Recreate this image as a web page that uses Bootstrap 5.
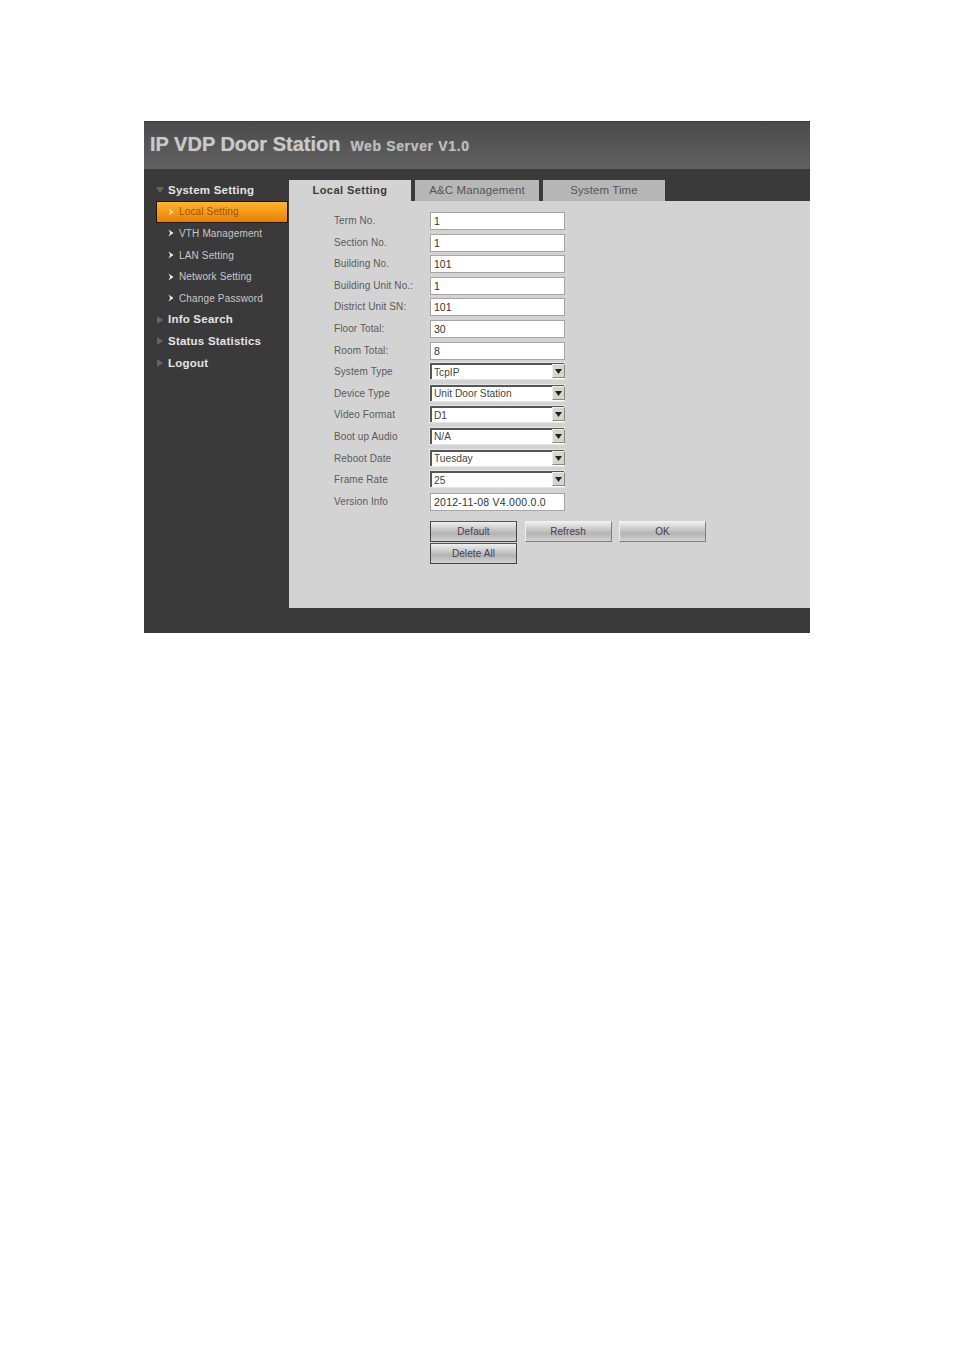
<!DOCTYPE html>
<html lang="en">
<head>
<meta charset="utf-8">
<title>IP VDP Door Station</title>
<link href="https://cdn.jsdelivr.net/npm/bootstrap@5.3.0/dist/css/bootstrap.min.css" rel="stylesheet">
<style>
body{background:#fff;font-family:"Liberation Sans",Arial,sans-serif;min-height:1349px}
.sheet{padding:121px 144px 0;}
.win{width:666px;height:512px;background:#3a3a3a;border-top:1px solid #3c3c3c;overflow:hidden}
.hdr{height:47px;background:linear-gradient(#4b4b4b,#616161);color:#c9c9c9;padding:9px 0 0 6px;gap:10px;text-shadow:0 0 1px #999}
.hdr-a{font-size:20px;font-weight:700;line-height:26px}
.hdr-b{font-size:14px;font-weight:700;line-height:30px;letter-spacing:.65px;color:#bdbdbd}
.bodyrow{height:439px}
.side{width:145px;padding:10.5px 0 0 12px;flex:none}
.grp{height:21.6px;font-size:11.5px;font-weight:700;color:#e4e4e4;letter-spacing:.22px;gap:4px;line-height:21px}
.grp svg{flex:none;width:8px;height:8px}
.sub{height:21.6px;font-size:10px;color:#c8c8c8;width:132px;gap:5px;padding-left:12px;line-height:21px;letter-spacing:.15px}
.sub svg{flex:none;width:6px;height:8px}
.sub.on{background:linear-gradient(#ffb52e,#e97f05);color:#a0520c;border:1px solid #20150a;padding-left:11px}
.main{flex:1;padding-top:11px;min-width:0}
.tabbar{height:21px;gap:4px}
.tabx{background:#b7b7b7;color:#555;font-size:11.5px;line-height:21px;text-align:center;border:0;border-radius:0;padding:0;letter-spacing:.1px}
.t1{width:122px;background:#d3d3d3;color:#3b3b3b;font-size:11px;font-weight:700;letter-spacing:.45px}
.t2{width:124px}.t3{width:122px}
.panel{background:#d3d3d3;height:407px;padding:11px 0 0 45px}
.frow{height:21.6px;align-items:flex-start}
.lab{width:96px;font-size:10px;color:#5a5a5a;line-height:18px;letter-spacing:.1px;margin:0;padding:0}
.inp.form-control{width:135px;height:18px;min-height:0;border:1px solid #a5a5a5;border-radius:0;padding:0 3px;font-size:10.5px;line-height:16px;color:#333;background:#fff;font-family:inherit;box-shadow:none}
.inp.wide.form-control{font-size:10.5px;letter-spacing:.25px}
.seln{width:136px;height:17px;position:relative;flex:none}
.sel.form-select{width:134px;height:16px;min-height:0;border:0;border-top:2px solid #555;border-left:2px solid #555;outline:1px solid #e6e6e6;outline-offset:0;border-radius:0;padding:0 18px 0 2px;font-size:10.2px;line-height:13px;color:#444;background:#fff;font-family:inherit;box-shadow:none}
.arrow{position:absolute;right:1px;top:1px;width:13px;height:14px;background:#d8d4c8;border:1px solid #8a8a80;border-top-color:#eee;border-left-color:#eee}
.arrow svg{display:block;width:7px;height:5px;margin:4px 0 0 2px}
.acts{width:280px;margin:6.5px 0 0 96px;gap:1px 7.5px}
.btnx.btn{width:87px;height:21px;padding:0;font-size:10px;line-height:19px;color:#4c3c4c;border:1px solid #7e7e7e;border-top-color:#f2f2f2;border-left-color:#eee;border-radius:0;background:linear-gradient(#efefef,#b4b4b4 60%,#d2d2d2);letter-spacing:.1px}
.btnx.dk{border-color:#444;border-top-color:#555}
</style>
</head>
<body>
<div class="sheet">
<div class="win d-flex flex-column">
  <div class="hdr d-flex align-items-start">
    <span class="hdr-a">IP VDP Door Station</span><span class="hdr-b">Web Server V1.0</span>
  </div>
  <div class="bodyrow d-flex">
    <nav class="side">
      <div class="grp d-flex align-items-center"><svg viewBox="0 0 8 8"><path d="M0 1H8L4 7Z" fill="#666"/></svg>System Setting</div>
      <div class="sub on d-flex align-items-center"><svg viewBox="0 0 6 8"><path d="M.5 .5 5.5 4 .5 7.5 2.2 4Z" fill="#ffe9a8"/></svg>Local Setting</div>
      <div class="sub d-flex align-items-center"><svg viewBox="0 0 6 8"><path d="M.5 .5 5.5 4 .5 7.5 2.2 4Z" fill="#eee"/></svg>VTH Management</div>
      <div class="sub d-flex align-items-center"><svg viewBox="0 0 6 8"><path d="M.5 .5 5.5 4 .5 7.5 2.2 4Z" fill="#eee"/></svg>LAN Setting</div>
      <div class="sub d-flex align-items-center"><svg viewBox="0 0 6 8"><path d="M.5 .5 5.5 4 .5 7.5 2.2 4Z" fill="#eee"/></svg>Network Setting</div>
      <div class="sub d-flex align-items-center"><svg viewBox="0 0 6 8"><path d="M.5 .5 5.5 4 .5 7.5 2.2 4Z" fill="#eee"/></svg>Change Password</div>
      <div class="grp d-flex align-items-center"><svg viewBox="0 0 8 8"><path d="M1 0V8L7 4Z" fill="#666"/></svg>Info Search</div>
      <div class="grp d-flex align-items-center"><svg viewBox="0 0 8 8"><path d="M1 0V8L7 4Z" fill="#666"/></svg>Status Statistics</div>
      <div class="grp d-flex align-items-center"><svg viewBox="0 0 8 8"><path d="M1 0V8L7 4Z" fill="#666"/></svg>Logout</div>
    </nav>
    <div class="main">
      <div class="tabbar d-flex">
        <button class="tabx t1" type="button">Local Setting</button>
        <button class="tabx t2" type="button">A&amp;C Management</button>
        <button class="tabx t3" type="button">System Time</button>
      </div>
      <form class="panel">
        <div class="frow d-flex"><label class="lab">Term No.</label><input class="inp form-control" value="1"></div>
        <div class="frow d-flex"><label class="lab">Section No.</label><input class="inp form-control" value="1"></div>
        <div class="frow d-flex"><label class="lab">Building No.</label><input class="inp form-control" value="101"></div>
        <div class="frow d-flex"><label class="lab">Building Unit No.:</label><input class="inp form-control" value="1"></div>
        <div class="frow d-flex"><label class="lab">District Unit SN:</label><input class="inp form-control" value="101"></div>
        <div class="frow d-flex"><label class="lab">Floor Total:</label><input class="inp form-control" value="30"></div>
        <div class="frow d-flex"><label class="lab">Room Total:</label><input class="inp form-control" value="8"></div>
        <div class="frow d-flex"><label class="lab">System Type</label><div class="seln"><select class="sel form-select"><option>TcpIP</option></select><span class="arrow"><svg viewBox="0 0 7 5"><path d="M0 0H7L3.5 5Z" fill="#222"/></svg></span></div></div>
        <div class="frow d-flex"><label class="lab">Device Type</label><div class="seln"><select class="sel form-select"><option>Unit Door Station</option></select><span class="arrow"><svg viewBox="0 0 7 5"><path d="M0 0H7L3.5 5Z" fill="#222"/></svg></span></div></div>
        <div class="frow d-flex"><label class="lab">Video Format</label><div class="seln"><select class="sel form-select"><option>D1</option></select><span class="arrow"><svg viewBox="0 0 7 5"><path d="M0 0H7L3.5 5Z" fill="#222"/></svg></span></div></div>
        <div class="frow d-flex"><label class="lab">Boot up Audio</label><div class="seln"><select class="sel form-select"><option>N/A</option></select><span class="arrow"><svg viewBox="0 0 7 5"><path d="M0 0H7L3.5 5Z" fill="#222"/></svg></span></div></div>
        <div class="frow d-flex"><label class="lab">Reboot Date</label><div class="seln"><select class="sel form-select"><option>Tuesday</option></select><span class="arrow"><svg viewBox="0 0 7 5"><path d="M0 0H7L3.5 5Z" fill="#222"/></svg></span></div></div>
        <div class="frow d-flex"><label class="lab">Frame Rate</label><div class="seln"><select class="sel form-select"><option>25</option></select><span class="arrow"><svg viewBox="0 0 7 5"><path d="M0 0H7L3.5 5Z" fill="#222"/></svg></span></div></div>
        <div class="frow d-flex"><label class="lab">Version Info</label><input class="inp wide form-control" value="2012-11-08 V4.000.0.0"></div>
        <div class="acts d-flex flex-wrap">
          <button class="btnx btn dk" type="button">Default</button>
          <button class="btnx btn" type="button">Refresh</button>
          <button class="btnx btn" type="button">OK</button>
          <button class="btnx btn dk" type="button">Delete All</button>
        </div>
      </form>
    </div>
  </div>
</div>
</div>
<script src="https://cdn.jsdelivr.net/npm/bootstrap@5.3.0/dist/js/bootstrap.bundle.min.js"></script>
</body>
</html>
